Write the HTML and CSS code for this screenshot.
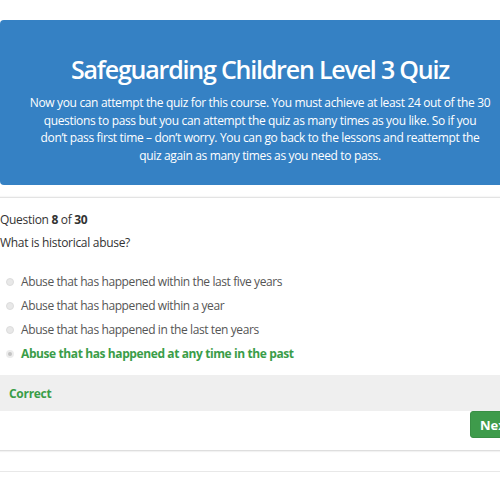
FILE: index.html
```html
<!DOCTYPE html>
<html>
<head>
<meta charset="utf-8">
<link rel="stylesheet" href="styles.css">
</head>
<body>
<div class="page">
  <div class="hero">
    <h1 class="hero-title">Safeguarding Children Level 3 Quiz</h1>
    <p class="hero-text">Now you can attempt the quiz for this course. You must achieve at least 24 out of the 30<br>questions to pass but you can attempt the quiz as many times as you like. So if you<br>don’t pass first time – don’t worry. You can go back to the lessons and reattempt the<br>quiz again as many times as you need to pass.</p>
  </div>
  <div class="quiz">
    <div class="q-count">Question <b>8</b> of <b>30</b></div>
    <div class="q-text">What is historical abuse?</div>
    <ul class="answers">
      <li class="answer"><span class="radio"></span>Abuse that has happened within the last five years</li>
      <li class="answer"><span class="radio"></span>Abuse that has happened within a year</li>
      <li class="answer"><span class="radio"></span>Abuse that has happened in the last ten years</li>
      <li class="answer correct"><span class="radio checked"></span>Abuse that has happened at any time in the past</li>
    </ul>
    <div class="result">Correct</div>
    <div class="actions"><button class="btn-next">Next</button></div>
  </div>
  <div class="spacer"></div>
</div>
</body>
</html>
```
FILE: styles.css
```css
html, body {
  margin: 0;
  padding: 0;
  background: #fff;
  overflow: hidden;
}
body {
  font-family: "Open Sans", "Noto Sans", sans-serif;
  color: #333;
}
.page {
  width: 520px;
}
.hero {
  margin-top: 20px;
  height: 165px;
  box-sizing: border-box;
  background: #3581c4;
  border-radius: 4px;
  color: #fff;
  text-align: center;
  padding: 34px 20px 0;
}
.hero-title {
  margin: 0;
  font-size: 25px;
  font-weight: 600;
  line-height: 30px;
  letter-spacing: -1.2px;
}
.hero-text {
  margin: 10px 0 0;
  font-size: 12px;
  line-height: 17.7px;
  letter-spacing: -0.35px;
}
.quiz {
  margin-top: 12px;
  border-top: 1px solid #e3e3e3;
  box-shadow: 0 -1px 1px rgba(0,0,0,0.03);
  padding-top: 14px;
}
.q-count {
  font-size: 12px;
  line-height: 16px;
  letter-spacing: -0.3px;
}
.q-text {
  margin-top: 7px;
  font-size: 12px;
  line-height: 16px;
  letter-spacing: -0.3px;
}
.answers {
  list-style: none;
  margin: 23px 0 0;
  padding: 0;
}
.answer {
  display: flex;
  align-items: center;
  font-size: 12px;
  line-height: 16px;
  color: #555;
  margin-bottom: 8px;
  letter-spacing: -0.4px;
}
.radio {
  flex: none;
  width: 8px;
  height: 8px;
  border-radius: 50%;
  background: #e8e8e8;
  border: 1px solid #dcdcdc;
  margin: 0 7px 0 6px;
  box-sizing: border-box;
}
.radio.checked {
  background: #c4c4c4;
  border: 2px solid #ececec;
}
.answer.correct {
  color: #3a9d48;
  font-weight: 700;
}
.result {
  margin-top: 13px;
  background: #efefef;
  height: 36px;
  display: flex;
  align-items: center;
  padding-left: 9px;
  font-size: 12px;
  font-weight: 700;
  color: #3a9d48;
  letter-spacing: -0.3px;
}
.actions {
  display: flex;
  justify-content: flex-end;
  height: 39px;
  border-bottom: 1px solid #dedede;
  box-shadow: 0 1px 1px rgba(0,0,0,0.05);
}
.btn-next {
  width: 50px;
  height: 27px;
  background: #3e9b4b;
  border: 1px solid #398f45;
  border-radius: 3px;
  color: #fff;
  font-family: inherit;
  font-weight: 700;
  font-size: 13px;
  text-align: left;
  padding-left: 9px;
}
.spacer {
  height: 20px;
  border-bottom: 1px solid #e8e8e8;
}
```
